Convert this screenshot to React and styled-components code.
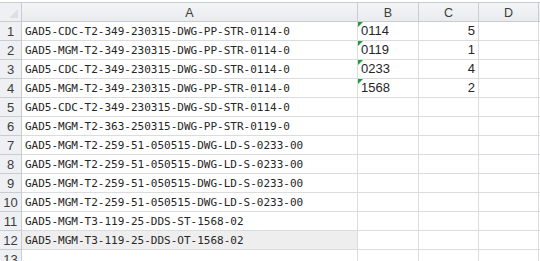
import React from "react";
import styled, { createGlobalStyle } from "styled-components";

const Global = createGlobalStyle`
  html, body { margin: 0; padding: 0; background: #ffffff; overflow: hidden; }
  * { box-sizing: border-box; }
`;

const Sheet = styled.div`
  width: 540px;
  height: 261px;
  padding-top: 2px;
  background: #fff;
  overflow: hidden;
`;

const Grid = styled.div`
  display: grid;
  grid-template-columns: 22px 336px 61px 60px 60px 1fr;
  grid-auto-rows: 19px;
  border-top: 1px solid #c9ccd1;
`;

const Corner = styled.div`
  position: relative;
  background: #eef0f3;
  border-right: 1px solid #c9ccd1;
  border-bottom: 1px solid #c9ccd1;
`;

const CornerTri = styled.div`
  position: absolute;
  right: 3px;
  bottom: 3px;
  width: 0;
  height: 0;
  border-left: 9px solid transparent;
  border-bottom: 9px solid #dcdfe3;
`;

const ColHead = styled.div`
  background: linear-gradient(#f3f4f6, #e9ebee);
  border-right: 1px solid #c9ccd1;
  border-bottom: 1px solid #c9ccd1;
  display: flex;
  align-items: center;
  justify-content: center;
  font-family: "Liberation Sans", Arial, sans-serif;
  font-size: 12.5px;
  color: #3c3c3c;
  padding-top: 1px;
`;

const RowHead = styled.div`
  background: #eef0f3;
  border-right: 1px solid #c9ccd1;
  border-bottom: 1px solid #c9ccd1;
  display: flex;
  align-items: center;
  justify-content: center;
  font-family: "Liberation Sans", Arial, sans-serif;
  font-size: 13px;
  color: #3c3c3c;
  padding-top: 1px;
`;

const Cell = styled.div`
  position: relative;
  background: ${(p) => (p.$shade ? "#eeeeee" : "#ffffff")};
  border-right: 1px solid #dadcdd;
  border-bottom: 1px solid #dadcdd;
  display: flex;
  align-items: flex-end;
  justify-content: ${(p) => (p.$right ? "flex-end" : "flex-start")};
  padding: 0 3px 3px 3px;
  font-family: ${(p) =>
    p.$mono
      ? `"DejaVu Sans Mono", "Liberation Mono", monospace`
      : `"Liberation Sans", Arial, sans-serif`};
  font-size: ${(p) => (p.$mono ? "11px" : "13px")};
  color: #262626;
  line-height: 1;
  white-space: nowrap;
`;

const Flag = styled.div`
  position: absolute;
  left: 0;
  top: 0;
  width: 0;
  height: 0;
  border-top: 5px solid #1e9b3a;
  border-right: 5px solid transparent;
`;

const rows = [
  ["GAD5-CDC-T2-349-230315-DWG-PP-STR-0114-0", "0114", "5"],
  ["GAD5-MGM-T2-349-230315-DWG-PP-STR-0114-0", "0119", "1"],
  ["GAD5-CDC-T2-349-230315-DWG-SD-STR-0114-0", "0233", "4"],
  ["GAD5-MGM-T2-349-230315-DWG-PP-STR-0114-0", "1568", "2"],
  ["GAD5-CDC-T2-349-230315-DWG-SD-STR-0114-0", "", ""],
  ["GAD5-MGM-T2-363-250315-DWG-PP-STR-0119-0", "", ""],
  ["GAD5-MGM-T2-259-51-050515-DWG-LD-S-0233-00", "", ""],
  ["GAD5-MGM-T2-259-51-050515-DWG-LD-S-0233-00", "", ""],
  ["GAD5-MGM-T2-259-51-050515-DWG-LD-S-0233-00", "", ""],
  ["GAD5-MGM-T2-259-51-050515-DWG-LD-S-0233-00", "", ""],
  ["GAD5-MGM-T3-119-25-DDS-ST-1568-02", "", ""],
  ["GAD5-MGM-T3-119-25-DDS-OT-1568-02", "", ""],
  ["", "", ""],
];

export default function App() {
  return (
    <>
      <Global />
      <Sheet>
        <Grid>
          <Corner>
            <CornerTri />
          </Corner>
          <ColHead>A</ColHead>
          <ColHead>B</ColHead>
          <ColHead>C</ColHead>
          <ColHead>D</ColHead>
          <ColHead />
          {rows.map((r, i) => (
            <React.Fragment key={i}>
              <RowHead>{i + 1}</RowHead>
              <Cell $mono $shade={i === 11}>{r[0]}</Cell>
              <Cell>
                {r[1] && <Flag />}
                {r[1]}
              </Cell>
              <Cell $right>{r[2]}</Cell>
              <Cell />
              <Cell />
            </React.Fragment>
          ))}
        </Grid>
      </Sheet>
    </>
  );
}
